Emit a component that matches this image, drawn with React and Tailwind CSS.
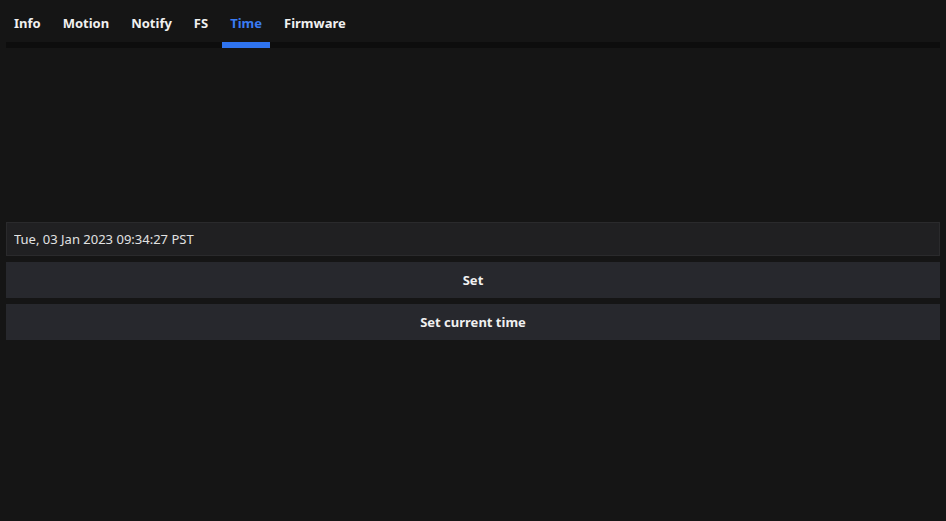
import { useState } from 'react'

const tabs = ['Info', 'Motion', 'Notify', 'FS', 'Time', 'Firmware']

export default function App() {
    const [active, setActive] = useState('Time')
    const [value, setValue] = useState('Tue, 03 Jan 2023 09:34:27 PST')

    return (
        <div className="min-h-[521px] bg-[#151515] px-[6px] text-[13px] text-[#e6e6e6] [font-family:'Noto_Sans',sans-serif]">
            <div className="flex gap-[6px] border-b-[6px] border-[#0d0d0d]">
                {tabs.map((tab) => (
                    <button
                        key={tab}
                        onClick={() => setActive(tab)}
                        className={
                            (tab === active ? 'border-[#2f74f0] text-[#3a7bf2]' : 'border-transparent text-[#f0f0f0]') +
                            ' -mb-[6px] border-b-[6px] px-2 pt-[13px] pb-[9px] leading-5 font-bold'
                        }
                    >
                        {tab}
                    </button>
                ))}
            </div>

            <div className="mt-[174px] flex flex-col gap-[6px]">
                <input
                    value={value}
                    onChange={(e) => setValue(e.target.value)}
                    className="h-[34px] w-full border border-[#2a2a2c] bg-[#202022] px-[7px] text-[13px] text-[#e2e2e2] outline-none"
                />
                <button className="h-[36px] w-full bg-[#27282d] pt-[2px] font-bold text-[#f0f0f0]">Set</button>
                <button className="h-[36px] w-full bg-[#27282d] pt-[2px] font-bold text-[#f0f0f0]">Set current time</button>
            </div>
        </div>
    )
}
